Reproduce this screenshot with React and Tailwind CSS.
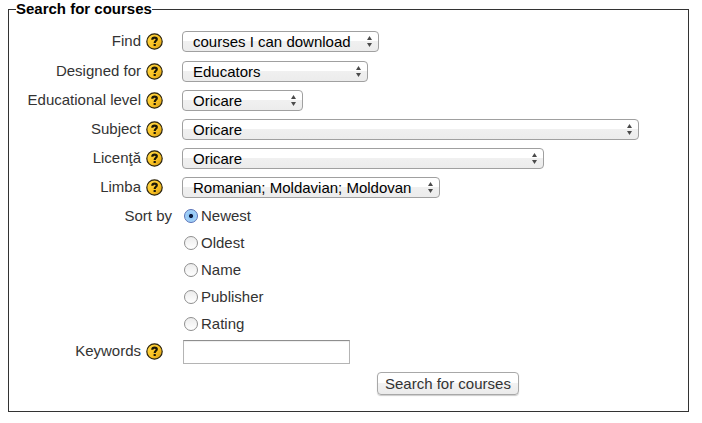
import React from "react";

function HelpIcon() {
  return (
    <svg width="17" height="17" viewBox="0 0 17 17" className="block" aria-hidden="true">
      <defs>
        <linearGradient id="help-fill" x1="0" y1="0" x2="1" y2="1">
          <stop offset="0" stopColor="#ffdc4d" />
          <stop offset="0.55" stopColor="#fbc324" />
          <stop offset="1" stopColor="#cf9714" />
        </linearGradient>
      </defs>
      <circle cx="8.5" cy="8.5" r="7.7" fill="url(#help-fill)" stroke="#2b2410" strokeWidth="1.2" />
      <path
        d="M6.3 6.7C6.3 5.3 7.2 4.7 8.6 4.7C10 4.7 10.8 5.3 10.8 6.3C10.8 7.7 8.7 7.9 8.7 9.9"
        fill="none"
        stroke="#1c1808"
        strokeWidth="2.2"
      />
      <rect x="7.6" y="11" width="2.2" height="2" fill="#1c1808" />
    </svg>
  );
}

function Row({ label, htmlFor, children }) {
  return (
    <div className="flex h-[29px] items-center first:mb-px">
      <div className="flex w-[147px] shrink-0 items-center justify-end gap-[5px] pb-0.5">
        <label htmlFor={htmlFor}>{label}</label>
        <button type="button" aria-label={`Help with ${label}`} className="mt-0.5">
          <HelpIcon />
        </button>
      </div>
      <div className="min-w-0 grow pl-[19px]">{children}</div>
    </div>
  );
}

function Select({ id, width, value }) {
  return (
    <div className={`relative max-w-full ${width}`}>
      <select
        id={id}
        defaultValue={value}
        className="block h-[21px] w-full appearance-none rounded-[4px] border border-[#a0a0a0] bg-linear-to-b from-white from-45% via-[#f0f0f0] via-50% to-[#ececec] pl-2.5 leading-[19px] text-black"
      >
        <option>{value}</option>
      </select>
      <svg
        width="5"
        height="11"
        viewBox="0 0 5 11"
        className="pointer-events-none absolute top-[5px] right-[7px]"
        aria-hidden="true"
      >
        <path d="M0 4L2.5 0L5 4ZM0 7L2.5 11L5 7Z" fill="#4a4a4a" />
      </svg>
    </div>
  );
}

const filters = [
  { id: "find", label: "Find", width: "w-[197px]", value: "courses I can download" },
  { id: "audience", label: "Designed for", width: "w-[186px]", value: "Educators" },
  { id: "level", label: "Educational level", width: "w-[121px]", value: "Oricare" },
  { id: "subject", label: "Subject", width: "w-[457px]", value: "Oricare" },
  { id: "licence", label: "Licenţă", width: "w-[362px]", value: "Oricare" },
  { id: "language", label: "Limba", width: "w-[258px]", value: "Romanian; Moldavian; Moldovan" },
];

const sorts = ["Newest", "Oldest", "Name", "Publisher", "Rating"];

export default function App() {
  return (
    <form
      className="bg-white pr-[13px] pl-2 font-['Liberation_Sans',Arial,sans-serif] text-[15px] leading-[18px] text-[#333]"
      onSubmit={(e) => e.preventDefault()}
    >
      <fieldset className="min-w-0 border border-[#333] px-[7px] pb-4">
        <legend className="font-bold text-black">Search for courses</legend>
        <div className="pt-[9px]">
          {filters.map((f) => (
            <Row key={f.id} label={f.label} htmlFor={f.id}>
              <Select id={f.id} width={f.width} value={f.value} />
            </Row>
          ))}
          <div role="radiogroup" aria-labelledby="sort-label" className="flex">
            <div id="sort-label" className="flex h-[27px] w-[156px] shrink-0 items-center justify-end">
              Sort by
            </div>
            <div className="pl-3">
              {sorts.map((s) => (
                <label key={s} className="flex h-[27px] items-center gap-[3px]">
                  <input
                    type="radio"
                    name="sort"
                    value={s}
                    defaultChecked={s === "Newest"}
                    className="size-3.5 appearance-none rounded-full border border-[#8f8f8f] bg-linear-to-b from-[#ececec] to-white checked:border-[#5670b8] checked:bg-radial checked:from-[#0c1c40] checked:from-20% checked:via-[#8fc4f5] checked:via-28% checked:to-[#b5def8]"
                  />
                  {s}
                </label>
              ))}
            </div>
          </div>
          <Row label="Keywords" htmlFor="keywords">
            <input
              id="keywords"
              type="text"
              className="ml-px block h-6 w-[167px] border border-[#b4b4b4] border-t-[#8e8e8e] bg-white px-1 shadow-[inset_0_1px_1px_#eee]"
            />
          </Row>
          <div className="flex pt-1.5 pl-[361px]">
            <button
              type="submit"
              className="h-[23px] rounded-[4px] border border-[#a8a8a8] bg-linear-to-b from-white from-45% via-[#f2f2f2] via-50% to-[#ebebeb] px-[7px] leading-[20px] shadow-[0_1px_1px_#ccc]"
            >
              Search for courses
            </button>
          </div>
        </div>
      </fieldset>
    </form>
  );
}
